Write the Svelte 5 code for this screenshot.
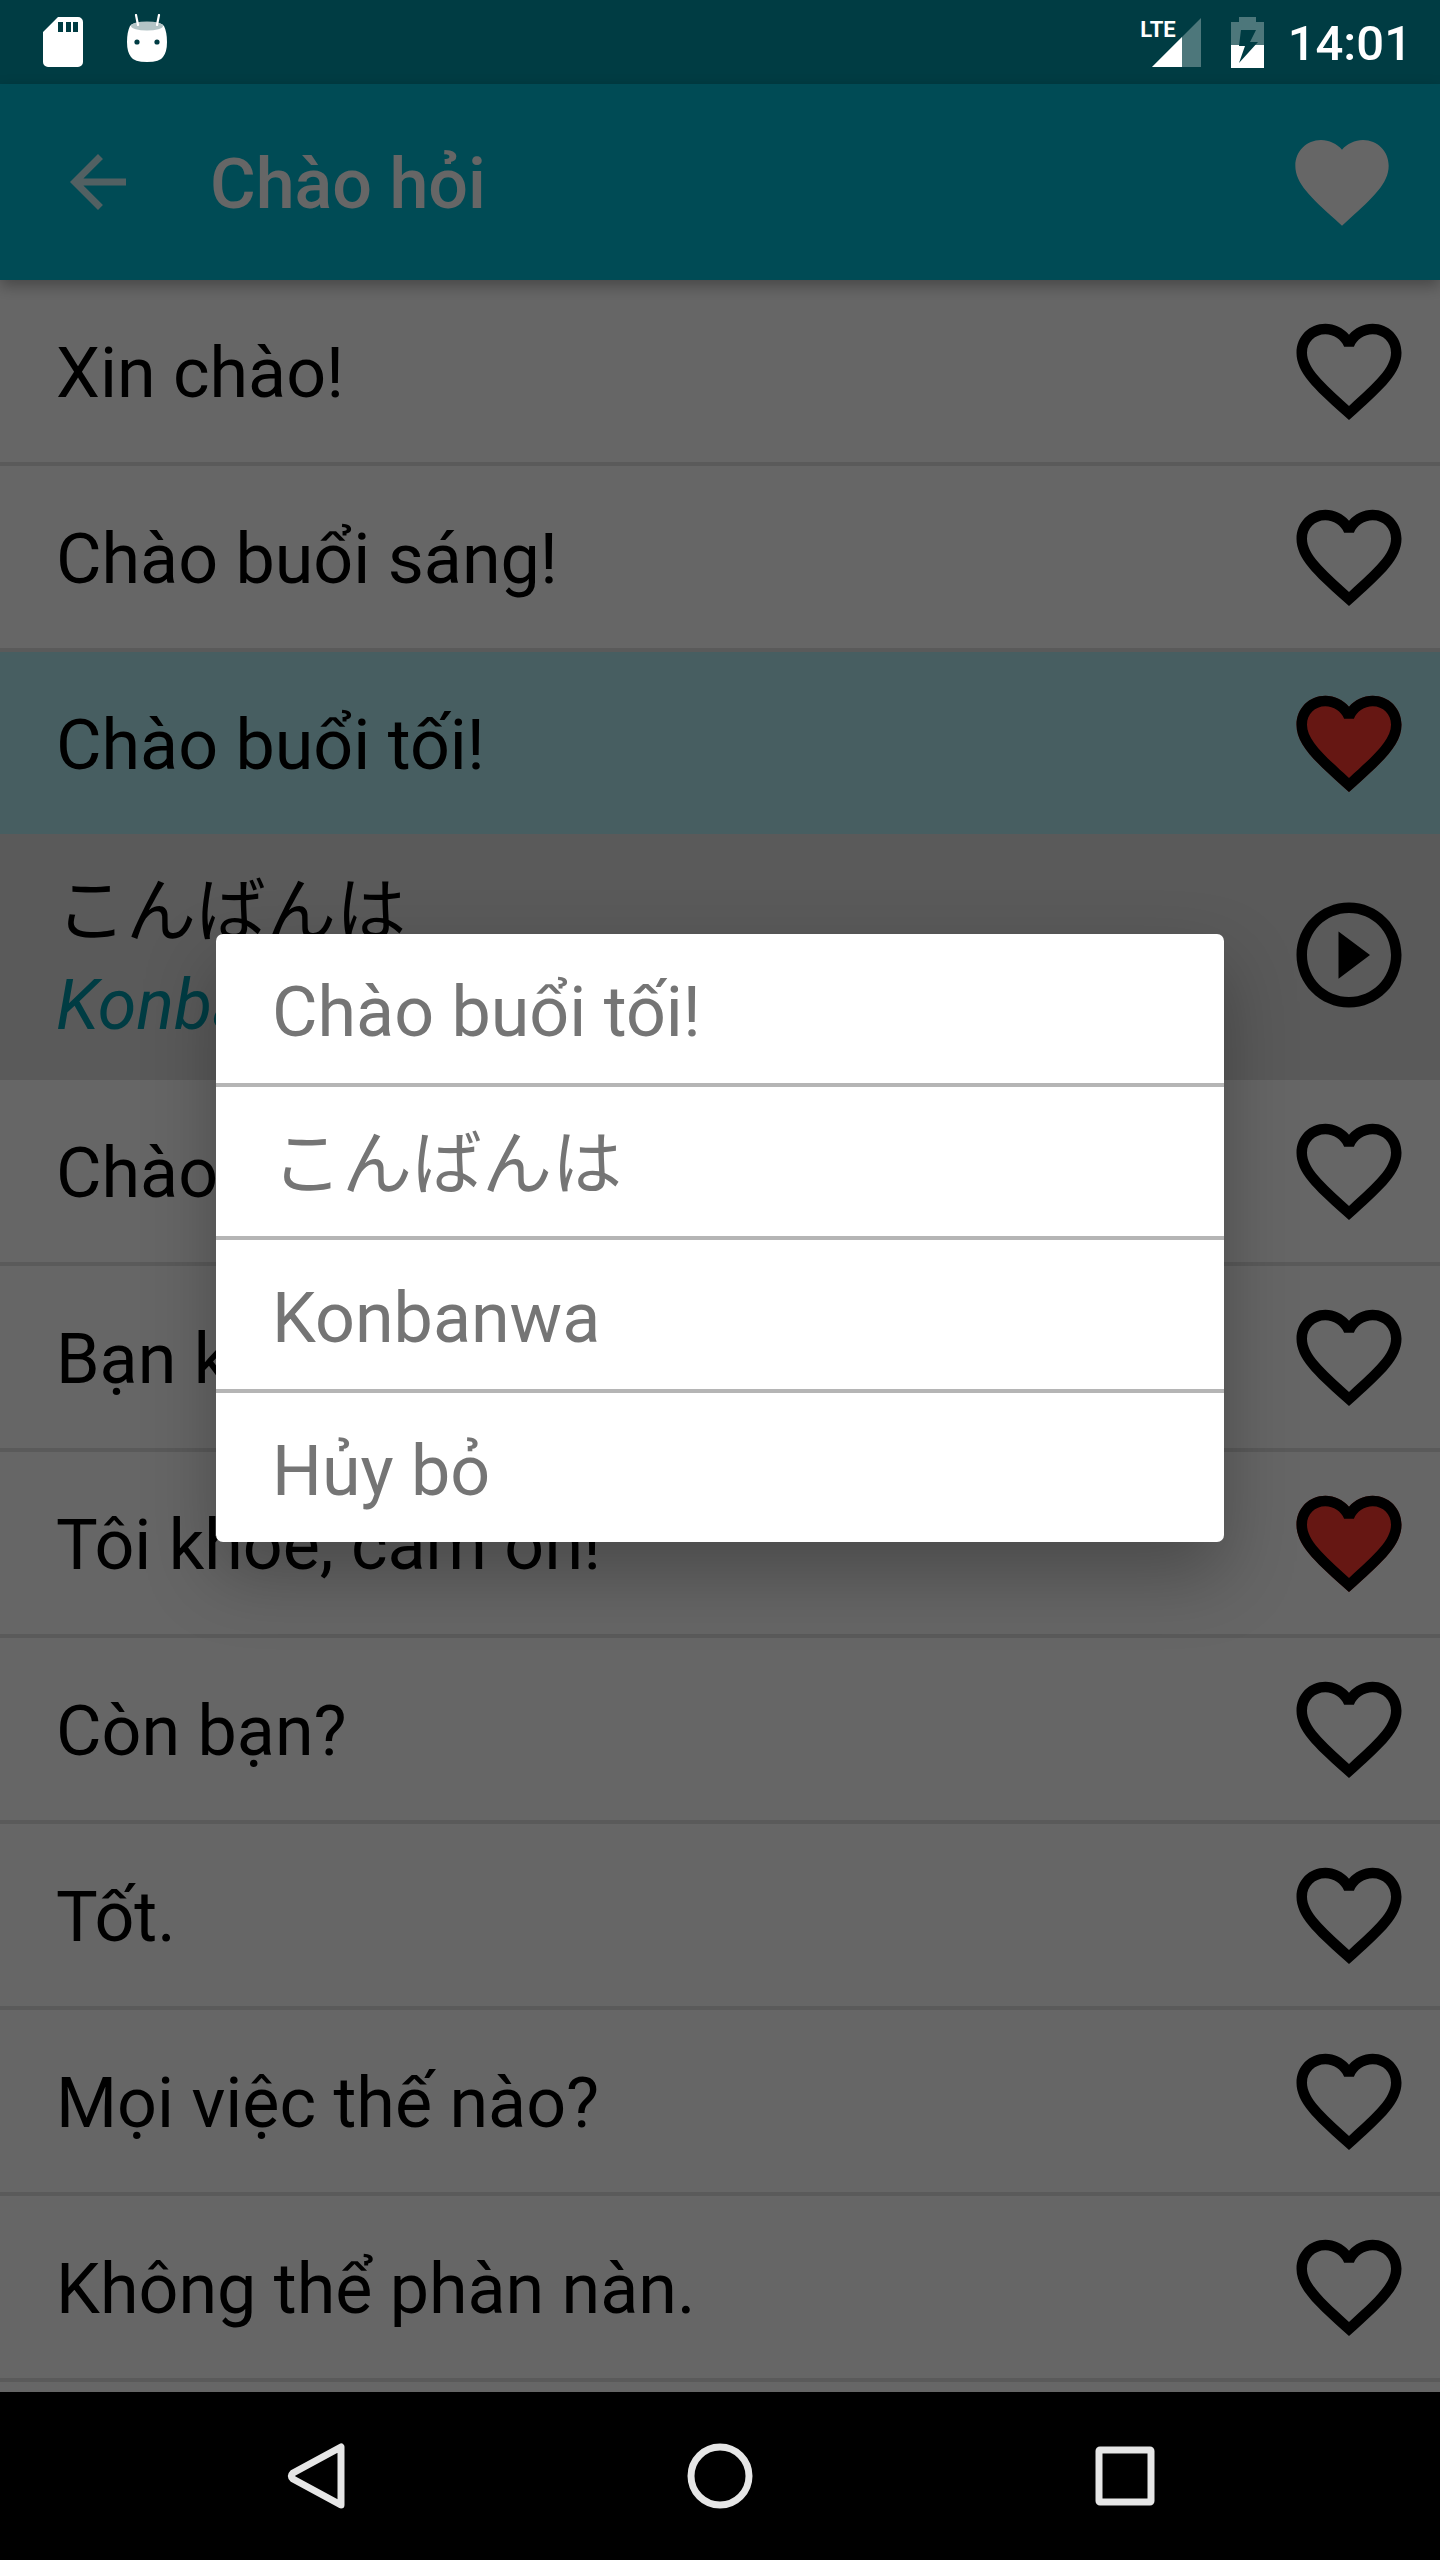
<script lang="ts">
	type Phrase = {
		text: string;
		liked?: boolean;
		kana?: string;
		romaji?: string;
	};

	let phrases: Phrase[] = $state([
		{ text: 'Xin chào!' },
		{ text: 'Chào buổi sáng!' },
		{ text: 'Chào buổi tối!', liked: true, kana: 'こんばんは', romaji: 'Konbanwa' },
		{ text: 'Chào mừng!' },
		{ text: 'Bạn khỏe không?' },
		{ text: 'Tôi khỏe, cảm ơn!', liked: true },
		{ text: 'Còn bạn?' },
		{ text: 'Tốt.' },
		{ text: 'Mọi việc thế nào?' },
		{ text: 'Không thể phàn nàn.' }
	]);
	let selected = $state(2);
	let menuOpen = $state(true);

	let options = $derived([
		phrases[selected].text,
		phrases[selected].kana,
		phrases[selected].romaji,
		'Hủy bỏ'
	]);

	const heart =
		'M12 21.35l-1.45-1.32C5.4 15.36 2 12.28 2 8.5 2 5.42 4.42 3 7.5 3c1.74 0 3.41.81 4.5 2.09C13.09 3.81 14.76 3 16.5 3 19.58 3 22 5.42 22 8.5c0 3.78-3.4 6.86-8.55 11.54L12 21.35z';
	const heartOutline =
		'M16.5 3c-1.74 0-3.41.81-4.5 2.09C10.91 3.81 9.24 3 7.5 3 4.42 3 2 5.42 2 8.5c0 3.78 3.4 6.86 8.55 11.54L12 21.35l1.45-1.32C18.6 15.36 22 12.28 22 8.5 22 5.42 19.58 3 16.5 3zm-4.4 15.55l-.1.1-.1-.1C7.14 14.24 4 11.39 4 8.5 4 6.5 5.5 5 7.5 5c1.54 0 3.04.99 3.57 2.36h1.87C13.46 5.99 14.96 5 16.5 5c2 0 3.5 1.5 3.5 3.5 0 2.89-3.14 5.74-7.9 10.05z';
</script>

<div class="screen">
	<div class="status">
		<svg class="sd" viewBox="0 0 40 50">
			<path
				fill="#fff"
				fill-rule="evenodd"
				d="M15 0H35a5 5 0 0 1 5 5V45a5 5 0 0 1-5 5H5a5 5 0 0 1-5-5V15zM15 5V15H20V5zM23 5V15H28V5zM30 5V15H35V5z"
			/>
		</svg>
		<svg class="droid" viewBox="0 0 40 48">
			<path
				fill="#fff"
				d="M3 12Q5 8 20 8T37 12Q40 18 40 28T36 43Q33 48 20 48T4 43Q0 38 0 28T3 12z"
			/>
			<ellipse cx="20" cy="12" rx="16" ry="4.5" fill="#b3c4c6" />
			<path d="M9 1l2 10M32 1l-2 10" stroke="#fff" stroke-width="2.2" stroke-linecap="round" />
			<circle cx="10" cy="28" r="2.6" fill="#003c43" />
			<circle cx="30" cy="28" r="2.6" fill="#003c43" />
		</svg>
		<div class="signal">
			<span>LTE</span>
			<svg viewBox="0 0 49 49">
				<path fill="#4d777b" d="M49 0V49H0z" />
				<path fill="#fff" d="M30 19V49H0z" />
			</svg>
		</div>
		<svg class="battery" viewBox="0 0 33 51">
			<path fill="#4d777b" d="M8 0H25V5H33V28H0V5H8z" />
			<path fill="#fff" d="M0 28H33V51H0z" />
			<path fill="#003c43" d="M10 13H25L19 25H27L8 46L14 29H8z" />
		</svg>
		<time>14:01</time>
	</div>

	<main>
		<header>
			<button class="back" aria-label="Quay lại">
				<svg viewBox="0 0 24 24">
					<path d="M20 11H7.83l5.59-5.59L12 4l-8 8 8 8 1.41-1.41L7.83 13H20v-2z" />
				</svg>
			</button>
			<h1>Chào hỏi</h1>
			<button class="favorites" aria-label="Yêu thích">
				<svg viewBox="0 0 24 24"><path d={heart} /></svg>
			</button>
		</header>

		<ul>
			{#each phrases as phrase, i}
				<li class:selected={i == selected}>
					<span class="phrase">{phrase.text}</span>
					<button
						class="icon"
						aria-label="Thích {phrase.text}"
						onclick={() => (phrase.liked = !phrase.liked)}
					>
						<svg viewBox="0 0 24 24">
							{#if phrase.liked}
								<path d={heart} fill="#ff3b30" />
							{/if}
							<path d={heartOutline} />
						</svg>
					</button>
				</li>
				{#if i == selected}
					<li class="detail">
						<div class="translation">
							<p lang="ja">{phrase.kana}</p>
							<p class="romaji">{phrase.romaji}</p>
						</div>
						<button class="icon" aria-label="Nghe">
							<svg viewBox="0 0 24 24">
								<path
									d="M10 16.5l6-4.5-6-4.5v9zM12 2C6.48 2 2 6.48 2 12s4.48 10 10 10 10-4.48 10-10S17.52 2 12 2zm0 18c-4.41 0-8-3.59-8-8s3.59-8 8-8 8 3.59 8 8-3.59 8-8 8z"
								/>
							</svg>
						</button>
					</li>
				{/if}
			{/each}
		</ul>

		{#if menuOpen}
			<div class="scrim">
				<div class="menu" role="dialog" aria-modal="true" aria-label="Tùy chọn">
					{#each options as option}
						<button onclick={() => (menuOpen = false)}>{option}</button>
					{/each}
				</div>
			</div>
		{/if}
	</main>

	<nav>
		<button aria-label="Back">
			<svg viewBox="0 0 66 66">
				<path d="M59 4V62L11 36Q8 33 11 30z" />
			</svg>
		</button>
		<button aria-label="Home">
			<svg viewBox="0 0 66 66"><circle cx="33" cy="33" r="29" /></svg>
		</button>
		<button aria-label="Overview">
			<svg viewBox="0 0 66 66"><rect x="7" y="7" width="52" height="52" rx="1" /></svg>
		</button>
	</nav>
</div>

<style>
	:global(body) {
		margin: 0;
		background: #000;
	}

	.screen {
		display: flex;
		flex-direction: column;
		min-height: 100vh;
		font-family: Roboto, 'Noto Sans CJK JP', sans-serif;
		font-size: 70px;
		line-height: 93px;
		color: #000;
	}

	button {
		display: block;
		padding: 0;
		border: 0;
		background: none;
		font: inherit;
		color: inherit;
		cursor: pointer;
	}

	svg {
		display: block;
	}

	.status {
		display: flex;
		align-items: center;
		height: 84px;
		padding: 0 28px 0 43px;
		box-sizing: border-box;
		background: #003c43;
		color: #fff;
	}

	.sd {
		width: 40px;
		height: 50px;
	}

	.droid {
		width: 40px;
		height: 48px;
		margin: 0 auto 8px 44px;
	}

	.signal {
		display: flex;
	}

	.signal span {
		margin-right: -24px;
		font: bold 22px/24px 'Liberation Sans Narrow', Roboto, sans-serif;
	}

	.signal svg {
		width: 49px;
		height: 49px;
	}

	.battery {
		width: 33px;
		height: 51px;
		margin: 0 24px 0 30px;
	}

	time {
		padding-top: 4px;
		font-size: 49px;
		line-height: 60px;
		font-weight: 500;
	}

	main {
		position: relative;
		flex: 1;
		background: #fff;
	}

	header {
		position: relative;
		display: flex;
		align-items: center;
		padding: 42px 42px 42px 56px;
		background: #00bcd4;
		color: #fff;
		fill: #fff;
		box-shadow: 0 6px 14px rgba(0, 0, 0, 0.3);
	}

	.back {
		width: 84px;
		opacity: 0.8;
	}

	.favorites {
		width: 112px;
	}

	h1 {
		flex: 1;
		margin: 0;
		padding: 5px 0 0 70px;
		font-size: 70px;
		font-weight: 500;
	}

	ul {
		margin: 0;
		padding: 0;
		list-style: none;
	}

	li {
		display: flex;
		align-items: center;
		justify-content: space-between;
		padding: 28px 28px 28px 56px;
		border-bottom: 4px solid #e0e0e0;
	}

	.selected {
		border-bottom: 0;
		background: #b2ebf2;
	}

	.detail {
		background: #e0e0e0;
	}

	.phrase {
		padding-top: 5px;
	}

	.icon {
		width: 126px;
	}

	.translation {
		padding-top: 4px;
		margin-bottom: -4px;
	}

	p {
		margin: 0;
	}

	.romaji {
		font-style: italic;
		color: #0097a7;
	}

	.scrim {
		position: absolute;
		inset: 0;
		display: flex;
		align-items: center;
		justify-content: center;
		background: rgba(0, 0, 0, 0.6);
	}

	.menu {
		width: 70%;
		border-radius: 7px;
		background: #fff;
		color: #757575;
		box-shadow: 0 32px 72px rgba(0, 0, 0, 0.28);
	}

	.menu button {
		width: 100%;
		padding: 32px 56px 24px;
		text-align: left;
	}

	.menu button + button {
		border-top: 4px solid #b5b5b5;
	}

	nav {
		display: flex;
		padding: 51px 112px;
		background: #000;
	}

	nav button {
		flex: 1;
	}

	nav svg {
		width: 66px;
		height: 66px;
		margin: 0 auto;
		fill: none;
		stroke: #e6e6e6;
		stroke-width: 7;
		stroke-linejoin: round;
	}
</style>
